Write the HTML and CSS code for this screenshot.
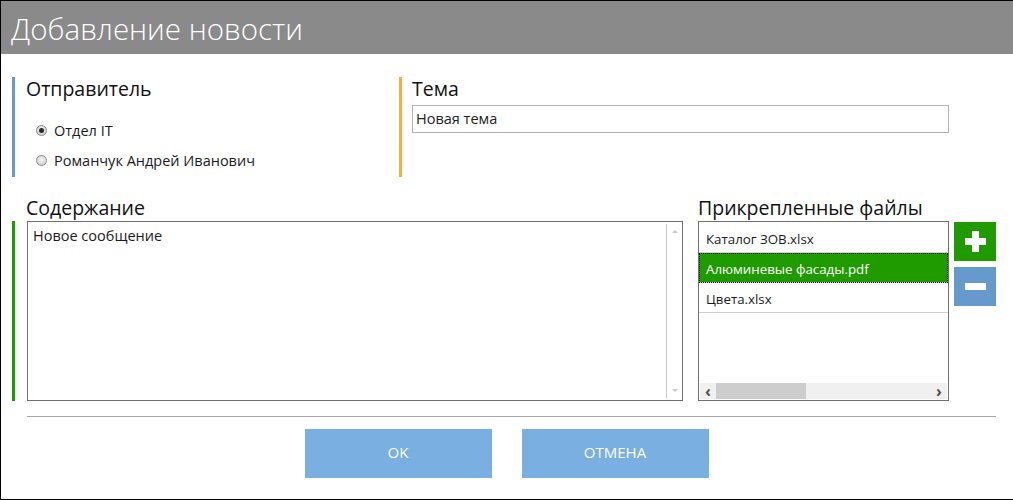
FILE: index.html
```html
<!DOCTYPE html>
<html lang="ru">
<head>
<meta charset="utf-8">
<title>Добавление новости</title>
<link rel="stylesheet" href="styles.css">
</head>
<body>
<div class="window">
  <div class="titlebar">Добавление новости</div>
  <div class="top-row">
    <div class="section sender">
      <div class="heading">Отправитель</div>
      <div class="radios">
        <div class="radio-row"><span class="radio checked"></span><span>Отдел IT</span></div>
        <div class="radio-row"><span class="radio"></span><span>Романчук Андрей Иванович</span></div>
      </div>
    </div>
    <div class="section theme">
      <div class="heading">Тема</div>
      <div class="input">Новая тема</div>
    </div>
  </div>
  <div class="mid-row">
    <div class="content-col">
      <div class="heading h2">Содержание</div>
      <div class="section content">
        <div class="textarea">
          <div class="ta-text">Новое сообщение</div>
          <div class="vscroll">
            <span class="arr up"></span>
            <span class="arr down"></span>
          </div>
        </div>
      </div>
    </div>
    <div class="files-col">
      <div class="heading h2">Прикрепленные файлы</div>
      <div class="files-row">
        <div class="listbox">
          <div class="items">
            <div class="item">Каталог ЗОВ.xlsx</div>
            <div class="item selected">Алюминевые фасады.pdf</div>
            <div class="item">Цвета.xlsx</div>
          </div>
          <div class="hscroll">
            <span class="harr">&lsaquo;</span>
            <span class="track"><span class="thumb"></span></span>
            <span class="harr">&rsaquo;</span>
          </div>
        </div>
        <div class="side-buttons">
          <div class="sq-btn add"><span class="bar h"></span><span class="bar v"></span></div>
          <div class="sq-btn remove"><span class="bar h"></span></div>
        </div>
      </div>
    </div>
  </div>
  <div class="divider"></div>
  <div class="actions">
    <div class="btn">OK</div>
    <div class="btn">ОТМЕНА</div>
  </div>
</div>
</body>
</html>
```

FILE: styles.css
```css
* { box-sizing: border-box; }
html, body { margin: 0; padding: 0; background: #fff; }
body { font-family: "Open Sans", "Noto Sans", sans-serif; color: #1a1a1a; }

.window {
  width: 1013px;
  height: 500px;
  border-left: 1px solid #000;
  border-top: 1px solid #000;
  border-bottom: 1px solid #000;
  overflow: hidden;
}

.titlebar {
  height: 53px;
  background: #8a8a8a;
  color: #fff;
  font-weight: 300;
  font-size: 29.5px;
  line-height: 55px;
  padding-left: 10px;
}

.top-row {
  display: flex;
  margin-top: 23px;
  padding-left: 11px;
}

.section { height: 100px; }
.sender {
  width: 387px;
  border-left: 3px solid #6699cc;
  padding-left: 11px;
}
.theme {
  border-left: 3px solid #ffa940;
  padding-left: 10px;
}

.heading {
  font-size: 19.5px;
  line-height: 24px;
  font-weight: 400;
  color: #111;
}

.radios {
  margin-top: 19px;
  padding-left: 10px;
  display: flex;
  flex-direction: column;
  gap: 10px;
}
.radio-row {
  display: flex;
  align-items: center;
  gap: 7px;
  font-size: 14.5px;
  height: 20px;
}
.radio {
  width: 11px;
  height: 11px;
  border-radius: 50%;
  border: 1px solid #8c8c8c;
  background: radial-gradient(circle at 50% 40%, #f4f4f4, #c8c8c8);
  position: relative;
  flex: none;
}
.radio.checked::after {
  content: "";
  position: absolute;
  left: 2px; top: 2px;
  width: 5px; height: 5px;
  border-radius: 50%;
  background: #2a2a2a;
}

.input {
  margin-top: 4px;
  width: 537px;
  height: 28px;
  border: 1px solid #b4b4b4;
  font-size: 14.5px;
  line-height: 26px;
  padding-left: 3px;
  color: #222;
}

.mid-row {
  display: flex;
  margin-top: 19px;
  padding-left: 11px;
}
.content-col { width: 671px; }
.h2 { padding-left: 14px; height: 25px; }
.content {
  height: 180px;
  border-left: 3px solid #1f9b00;
  padding-left: 12px;
}
.textarea {
  width: 656px;
  height: 180px;
  border: 1px solid #707070;
  display: flex;
}
.ta-text {
  flex: 1;
  font-size: 14.5px;
  padding: 4px 5px;
  line-height: 20px;
}
.vscroll {
  width: 16px;
  margin: 2px 0;
  border-left: 1px solid #c8c8c8;
  display: flex;
  flex-direction: column;
  justify-content: space-between;
  align-items: center;
  padding: 6px 0;
}
.arr {
  width: 0; height: 0;
  border-left: 3px solid transparent;
  border-right: 3px solid transparent;
}
.arr.up { border-bottom: 3px solid #c8c8c8; }
.arr.down { border-top: 3px solid #c8c8c8; }

.files-col { margin-left: 15px; }
.files-col .h2 { padding-left: 0; }
.files-row { display: flex; gap: 5px; }
.listbox {
  width: 251px;
  height: 180px;
  border: 1px solid #707070;
  display: flex;
  flex-direction: column;
  justify-content: space-between;
}
.items { padding-top: 1px; }
.item {
  height: 30px;
  line-height: 33px;
  font-size: 13.3px;
  padding-left: 7px;
  border-bottom: 1px solid #cfcfcf;
  overflow: hidden;
}
.item.selected {
  background: #1f9b00;
  color: #fff;
  outline: 1px dotted #000;
  outline-offset: -1px;
}
.hscroll {
  height: 16px;
  margin: 0 1px 1px 1px;
  background: #f0f0f0;
  display: flex;
  align-items: center;
}
.harr {
  width: 16px;
  text-align: center;
  font-size: 16px;
  line-height: 14px;
  font-weight: 700;
  color: #505050;
}
.track { flex: 1; height: 16px; }
.thumb {
  display: block;
  width: 90px;
  height: 16px;
  background: #cdcdcd;
}

.side-buttons { display: flex; flex-direction: column; gap: 6px; margin-top: 1px; }
.sq-btn {
  width: 42px;
  height: 39px;
  position: relative;
}
.sq-btn.add { background: #1f9b00; }
.sq-btn.remove { background: #6699cc; }
.bar { position: absolute; background: #fff; }
.bar.h { left: 11px; top: 16px; width: 21px; height: 7px; }
.bar.v { left: 18px; top: 9px; width: 7px; height: 21px; }

.divider {
  margin: 15px 17px 0 26px;
  height: 1px;
  background: #a8a8a8;
}
.actions {
  display: flex;
  justify-content: center;
  gap: 30px;
  margin-top: 12px;
  padding-right: 1px;
}
.btn {
  width: 187px;
  height: 49px;
  background: #7aafe2;
  color: #fff;
  font-size: 15px;
  line-height: 47px;
  text-align: center;
}
```
